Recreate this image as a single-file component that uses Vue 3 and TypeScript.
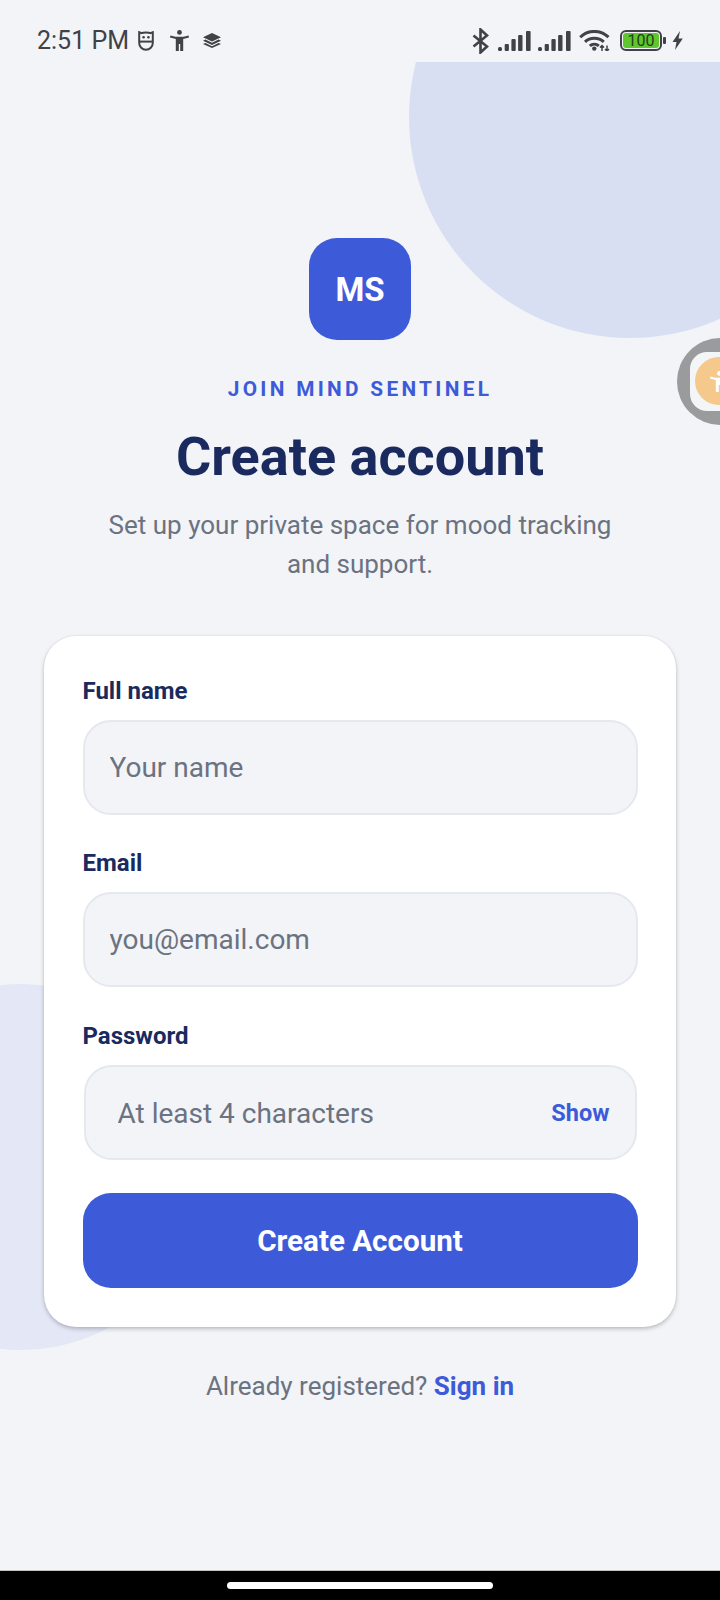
<template>
  <div class="screen">
    <div class="blob blob-top"></div>
    <div class="blob blob-left"></div>

    <header class="status-bar">
      <div class="status-left">
        <span class="time">2:51 PM</span>
        <svg class="ic-mask" width="16" height="20" viewBox="0 0 16 20" fill="none" stroke="#3f4246" stroke-width="2">
          <path d="M1.200 1.200 3.500 2.200C5 1.400 11 1.400 12.500 2.200L14.800 1.200V12a6.800 6.800 0 0 1-13.600 0z" />
          <path d="M1.200 10.600h13.600" />
          <circle cx="5.600" cy="6.300" r="1.300" fill="#3f4246" stroke="none" />
          <circle cx="10.400" cy="6.300" r="1.300" fill="#3f4246" stroke="none" />
        </svg>
        <svg class="ic-person" width="19" height="21" viewBox="0 0 19 21" fill="#3f4246">
          <circle cx="9.500" cy="2.400" r="2.400" />
          <path d="M.400 5.600 0 7.400 5.800 9V21h3v-7h1.400v7h3V9L19 7.400l-.400-1.800-5 1.100H5.400z" />
        </svg>
        <svg class="ic-layers" width="18" height="15" viewBox="0 0 18 15" fill="#3f4246">
          <path d="M9 0 18 4.300 9 8.600 0 4.300z" />
          <path d="M2.400 6.600 9 9.800l6.600-3.200L18 7.700 9 12 0 7.700z" />
          <path d="M2.400 10 9 13.200 15.600 10 18 11 9 15 0 11z" />
        </svg>
      </div>
      <div class="status-right">
        <svg class="bt" width="17" height="26" viewBox="0 0 17 26" fill="none" stroke="#3f4246" stroke-width="2.600">
          <path d="M1.500 7.500 15 18.500 8.500 24.500V1.500L15 7.500 1.500 18.500" />
        </svg>
        <svg v-for="n in 2" :key="n" class="signal" width="33" height="20" viewBox="0 0 33 20" fill="#3f4246">
          <rect x="0" y="16" width="4" height="4" rx="1.500" />
          <rect x="6.700" y="13" width="4.200" height="7" rx="1" />
          <rect x="13.400" y="8" width="4.300" height="12" rx="1" />
          <rect x="20.100" y="4" width="4.400" height="16" rx="1" />
          <rect x="28" y="0" width="4.600" height="20" rx="1" />
        </svg>
        <svg class="wifi" width="31" height="21" viewBox="0 0 31 21" fill="none" stroke="#3f4246" stroke-width="3">
          <path d="M1.200 7.200C9 -0.500 21.500 -0.500 29.500 7.200" />
          <path d="M6 11.800C11 7 19.500 7 24.800 11.800" />
          <path d="M10.800 15.800c2.600-2.200 6.500-2.200 9 0" />
          <circle cx="15.300" cy="18.600" r="2.200" fill="#3f4246" stroke="none" />
          <path d="M23 21v-5.500M21 17.500l2-2 2 2M28 15.500V21M26 19l2 2 2-2" stroke-width="1.500" />
        </svg>
        <div class="battery">
          <div class="battery-body"><span class="battery-level">100</span></div>
          <div class="battery-cap"></div>
        </div>
        <svg class="bolt" width="11" height="19" viewBox="0 0 11 19" fill="#3f4246">
          <path d="M8 0 .500 11h4L3 19 10.800 7.500H6.500z" />
        </svg>
      </div>
    </header>

    <main class="content">
      <div class="logo">MS</div>
      <p class="eyebrow">JOIN MIND SENTINEL</p>
      <h1 class="title">Create account</h1>
      <p class="subtitle">Set up your private space for mood tracking and support.</p>

      <form class="card" @submit.prevent>
        <label class="label" for="name">Full name</label>
        <input id="name" v-model="fullName" class="input" type="text" placeholder="Your name" />

        <label class="label" for="email">Email</label>
        <input id="email" v-model="email" class="input" type="email" placeholder="you@email.com" />

        <label class="label" for="password">Password</label>
        <div class="password-field">
          <input
            id="password"
            v-model="password"
            class="password-input"
            :type="showPassword ? 'text' : 'password'"
            placeholder="At least 4 characters"
          />
          <button class="show-btn" type="button" @click="showPassword = !showPassword">
            {{ showPassword ? 'Hide' : 'Show' }}
          </button>
        </div>

        <button class="submit" type="submit">Create Account</button>
      </form>

      <p class="footer-text">Already registered? <a class="link" href="#">Sign in</a></p>
    </main>

    <!-- floating accessibility bubble, cut off by the screen edge -->
    <div class="bubble">
      <div class="bubble-inner">
        <div class="bubble-dot">
          <svg width="19" height="21" viewBox="0 0 19 21" fill="#fff">
            <circle cx="9.500" cy="2.400" r="2.400" />
            <path d="M.400 5.600 0 7.400 5.800 9V21h3v-7h1.400v7h3V9L19 7.400l-.400-1.800-5 1.100H5.400z" />
          </svg>
        </div>
      </div>
    </div>

    <div class="nav-bar"><div class="home-pill"></div></div>
  </div>
</template>

<script setup lang="ts">
import { ref } from 'vue';

const fullName = ref('');
const email = ref('');
const password = ref('');
const showPassword = ref(false);
</script>

<style>
html,
body {
  margin: 0;
  background: #f2f4f8;
}
</style>

<style scoped>
.screen {
  position: relative;
  width: 720px;
  height: 1600px;
  overflow: hidden;
  background: #f2f4f8;
  font-family: Roboto, "Liberation Sans", sans-serif;
  display: flex;
  flex-direction: column;
}
.blob {
  position: absolute;
  border-radius: 50%;
}
.blob-top {
  left: 409px;
  top: -104px;
  width: 442px;
  height: 442px;
  background: #d9dff3;
}
.blob-left {
  left: -162px;
  top: 984px;
  width: 366px;
  height: 366px;
  background: #e3e7f6;
}
.status-bar {
  position: relative;
  height: 62px;
  flex-shrink: 0;
  background: #f2f4f8;
  display: flex;
  align-items: center;
  justify-content: space-between;
  padding: 0 37px 0 37px;
  box-sizing: border-box;
  color: #3f4246;
}
.status-left,
.status-right {
  display: flex;
  align-items: center;
  height: 100%;
  padding-top: 19px;
  box-sizing: border-box;
}
.time {
  font-size: 25px;
  font-weight: 400;
}
.ic-mask {
  margin-left: 9px;
}
.ic-person {
  margin-left: 16px;
}
.ic-layers {
  margin-left: 14px;
}
.signal {
  margin-left: 8px;
}
.bt + .signal {
  margin-left: 9px;
}
.signal + .signal {
  margin-left: 7px;
}
.wifi {
  margin-left: 8px;
}
.battery {
  display: flex;
  align-items: center;
  margin-left: 10px;
}
.battery-body {
  width: 36px;
  height: 15px;
  border: 2px solid #3f4246;
  border-radius: 6px;
  padding: 1px;
  box-sizing: content-box;
}
.battery-level {
  display: block;
  height: 15px;
  line-height: 15px;
  background: #5fc62e;
  border-radius: 3px;
  text-align: center;
  font-size: 16px;
  color: #24401a;
}
.battery-cap {
  width: 3px;
  height: 7px;
  margin-left: 1px;
  background: #3f4246;
  border-radius: 1px;
}
.bolt {
  margin-left: 6px;
}
.content {
  position: relative;
  display: flex;
  flex-direction: column;
  align-items: center;
  padding-top: 176px;
}
.logo {
  width: 102px;
  height: 102px;
  border-radius: 28px;
  background: #3d5bd9;
  color: #fff;
  font-size: 33px;
  font-weight: 700;
  display: flex;
  align-items: center;
  justify-content: center;
}
.eyebrow {
  margin: 37px 0 0;
  font-size: 20.800px;
  line-height: 24px;
  font-weight: 700;
  letter-spacing: 3.300px;
  color: #3d5bd9;
}
.title {
  margin: 25px 0 0;
  font-size: 54px;
  line-height: 62px;
  font-weight: 700;
  color: #1a2a5e;
}
.subtitle {
  width: 530px;
  margin: 18px 0 0;
  font-size: 26px;
  line-height: 39px;
  text-align: center;
  color: #6b7280;
}
.card {
  width: 632px;
  margin-top: 52px;
  padding: 41px 38.500px 39px;
  box-sizing: border-box;
  background: #fff;
  border-radius: 32px;
  box-shadow: 0 2px 4px rgba(0, 0, 0, 0.22), 0 0 2px rgba(0, 0, 0, 0.08);
  display: flex;
  flex-direction: column;
}
.label {
  font-size: 24px;
  line-height: 28px;
  font-weight: 700;
  color: #1a2a5e;
  margin-bottom: 15px;
}
.input,
.password-field {
  height: 95px;
  box-sizing: border-box;
  border: 2px solid #e6e8f0;
  border-radius: 28px;
  background: #f2f4f8;
  margin-bottom: 34.300px;
}
.input {
  width: 100%;
  padding: 0 25px;
  font-family: inherit;
  font-size: 28px;
  color: #1a2a5e;
  outline: none;
}
.input::placeholder,
.password-input::placeholder {
  color: #6b7280;
  opacity: 1;
}
.password-field {
  display: flex;
  align-items: center;
  margin: 0 1px 33.400px;
  padding: 2px 25px 0 32px;
}
.password-input {
  flex: 1;
  min-width: 0;
  border: none;
  padding: 0;
  background: transparent;
  font-family: inherit;
  font-size: 28px;
  color: #1a2a5e;
  outline: none;
}
.show-btn {
  border: none;
  background: none;
  padding: 0;
  font-family: inherit;
  font-size: 23.500px;
  font-weight: 700;
  color: #3d5bd9;
}
.submit {
  height: 95px;
  border: none;
  border-radius: 28px;
  padding: 2px 0 0;
  background: #3d5bd9;
  color: #fff;
  font-family: inherit;
  font-size: 29.600px;
  font-weight: 700;
}
.footer-text {
  margin: 43px 0 0;
  font-size: 26px;
  line-height: 32px;
  color: #6b7280;
}
.link {
  color: #3d5bd9;
  font-weight: 700;
  text-decoration: none;
}
.bubble {
  position: absolute;
  left: 677px;
  top: 338px;
  width: 87px;
  height: 87px;
  border-radius: 50%;
  background: #9a9b9d;
}
.bubble-inner {
  position: absolute;
  left: 13px;
  top: 14px;
  width: 70px;
  height: 59px;
  border-radius: 17px;
  background: #f4f5f7;
}
.bubble-dot {
  position: absolute;
  left: 5px;
  top: 5px;
  width: 48px;
  height: 48px;
  border-radius: 50%;
  background: #f5c88c;
  display: flex;
  align-items: center;
  justify-content: center;
}
.nav-bar {
  position: absolute;
  left: 0;
  right: 0;
  bottom: 0;
  height: 30px;
  background: #000;
  border-top: 1px solid #c4c4c4;
  box-sizing: border-box;
}
.home-pill {
  width: 266px;
  height: 7px;
  margin: 11px auto 0;
  background: #fff;
  border-radius: 4px;
}
</style>
